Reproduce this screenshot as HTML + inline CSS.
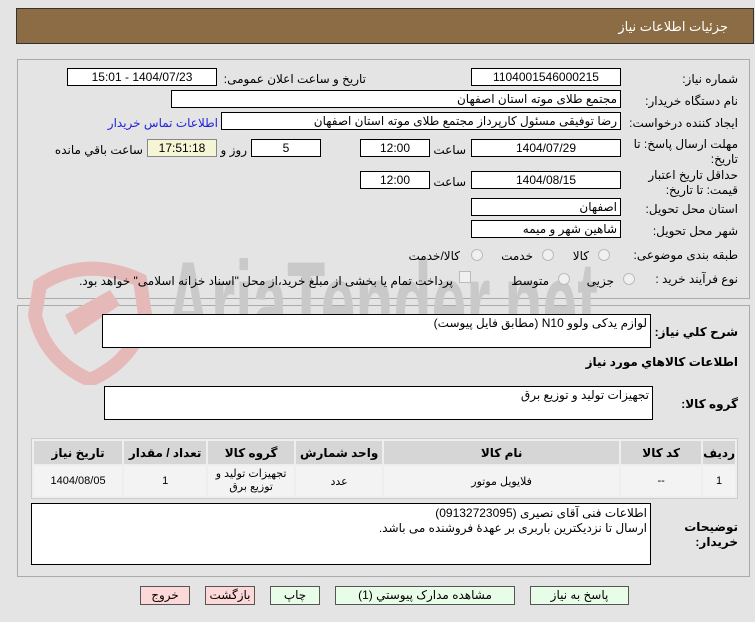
<!DOCTYPE html>
<html><head><meta charset="utf-8"><style>
*{box-sizing:border-box;margin:0;padding:0}
body{width:755px;height:622px;background:#e4e4e4;font-family:"Liberation Sans","DejaVu Sans",sans-serif;font-size:12px;color:#000;position:relative;overflow:hidden}
.a{position:absolute;white-space:nowrap}
.box{position:absolute;background:#fff;border:1px solid #000;height:18px;line-height:16px;padding:0 3px;direction:rtl;white-space:nowrap}
.c{text-align:center}
.l{position:absolute;direction:rtl;text-align:right;white-space:nowrap}
.rad{position:absolute;width:12px;height:12px;border-radius:50%;border:1px solid #bbb;background:#f0f0f0}
.btn{position:absolute;height:19px;border:1px solid #555;line-height:17px;text-align:center;direction:rtl;font-size:12px}
.g{background:#e8fde8}.p{background:#fdd8d8}
table{position:absolute;left:31px;top:438px;width:707px;border-collapse:separate;border-spacing:2px;background:#eee;border:1px solid #ccc;direction:rtl}
th{background:#d6d6d6;height:23px;font-weight:bold;font-size:12px}
td{background:#f3f3f3;height:30px;text-align:center;font-size:11px}
</style></head><body>
<div class="a" style="left:16px;top:8px;width:738px;height:36px;background:#8c6c44;border:1px solid #333"></div>
<div class="l" style="right:27px;top:19px;color:#fff;font-size:13px">جزئیات اطلاعات نیاز</div>

<div class="a" style="left:17px;top:59px;width:733px;height:240px;border:1px solid #aaa"></div>
<div class="a" style="left:17px;top:305px;width:733px;height:272px;border:1px solid #aaa"></div>

<!-- watermark -->
<svg class="a" style="left:15px;top:245px" width="620" height="140">
<path d="M25 40 Q70 10 125 35 L130 70 Q120 115 75 135 Q30 115 20 70 Z" fill="none" stroke="#e6b9b9" stroke-width="14"/>
<path d="M50 70 L95 45 L105 60 L60 90 Z" fill="#e6b9b9"/>
<text x="290" y="100" font-family="Liberation Sans" font-weight="bold" font-size="120" fill="#c9c9c9" transform="scale(0.52,1)">AriaTender.net</text>
</svg>

<div class="l" style="right:17px;top:72px">شماره نیاز:</div>
<div class="box c" style="left:471px;top:68px;width:150px">1104001546000215</div>
<div class="l" style="right:389px;top:72px">تاریخ و ساعت اعلان عمومی:</div>
<div class="box c" style="left:67px;top:68px;width:150px">1404/07/23 - 15:01</div>

<div class="l" style="right:17px;top:94px">نام دستگاه خریدار:</div>
<div class="box" style="left:171px;top:90px;width:450px">مجتمع طلای موته استان اصفهان</div>

<div class="l" style="right:17px;top:116px">ایجاد کننده درخواست:</div>
<div class="box" style="left:221px;top:112px;width:400px">رضا توفیقی مسئول کارپرداز مجتمع طلای موته استان اصفهان</div>
<div class="l" style="right:537px;top:116px;color:#2222dd">اطلاعات تماس خریدار</div>

<div class="l" style="right:17px;top:137px;line-height:15px;white-space:normal;width:105px">مهلت ارسال پاسخ: تا تاریخ:</div>
<div class="box c" style="left:471px;top:139px;width:150px">1404/07/29</div>
<div class="l" style="right:289px;top:143px">ساعت</div>
<div class="box c" style="left:360px;top:139px;width:70px">12:00</div>
<div class="box c" style="left:251px;top:139px;width:70px">5</div>
<div class="l" style="right:508px;top:143px">روز و</div>
<div class="box c" style="left:147px;top:139px;width:70px;background:#f5f5d5;border-color:#888">17:51:18</div>
<div class="l" style="right:612px;top:143px">ساعت باقي مانده</div>

<div class="l" style="right:17px;top:168px;line-height:15px;white-space:normal;width:105px">حداقل تاریخ اعتبار قیمت: تا تاریخ:</div>
<div class="box c" style="left:471px;top:171px;width:150px">1404/08/15</div>
<div class="l" style="right:289px;top:175px">ساعت</div>
<div class="box c" style="left:360px;top:171px;width:70px">12:00</div>

<div class="l" style="right:17px;top:202px">استان محل تحویل:</div>
<div class="box" style="left:471px;top:198px;width:150px">اصفهان</div>
<div class="l" style="right:17px;top:224px">شهر محل تحویل:</div>
<div class="box" style="left:471px;top:220px;width:150px">شاهین شهر و میمه</div>

<div class="l" style="right:17px;top:248px">طبقه بندی موضوعی:</div>
<div class="rad" style="left:598px;top:249px"></div><div class="l" style="right:166px;top:249px">کالا</div>
<div class="rad" style="left:542px;top:249px"></div><div class="l" style="right:222px;top:249px">خدمت</div>
<div class="rad" style="left:471px;top:249px"></div><div class="l" style="right:295px;top:249px">کالا/خدمت</div>

<div class="l" style="right:17px;top:272px">نوع فرآیند خرید :</div>
<div class="rad" style="left:623px;top:273px"></div><div class="l" style="right:141px;top:274px">جزیی</div>
<div class="rad" style="left:558px;top:273px"></div><div class="l" style="right:206px;top:274px">متوسط</div>
<div class="a" style="left:459px;top:271px;width:12px;height:12px;border:1px solid #bbb;background:#f0f0f0"></div>
<div class="l" style="right:302px;top:274px">پرداخت تمام یا بخشی از مبلغ خرید،از محل "اسناد خزانه اسلامی" خواهد بود.</div>

<div class="l" style="right:17px;top:325px;font-weight:bold">شرح کلي نیاز:</div>
<div class="box" style="left:102px;top:314px;width:549px;height:34px;background:#fff">لوازم یدکی ولوو N10 (مطابق فایل پیوست)</div>
<div class="l" style="right:17px;top:355px;font-weight:bold">اطلاعات کالاهاي مورد نیاز</div>
<div class="l" style="right:17px;top:397px;font-weight:bold">گروه کالا:</div>
<div class="box" style="left:104px;top:386px;width:549px;height:34px">تجهیزات تولید و توزیع برق</div>

<table>
<tr><th style="width:27px">ردیف</th><th style="width:80px">کد کالا</th><th style="width:235px">نام کالا</th><th style="width:86px">واحد شمارش</th><th style="width:86px">گروه کالا</th><th style="width:82px">تعداد / مقدار</th><th>تاریخ نیاز</th></tr>
<tr><td>1</td><td>--</td><td>فلایویل موتور</td><td>عدد</td><td style="line-height:13px">تجهیزات تولید و توزیع برق</td><td>1</td><td>1404/08/05</td></tr>
</table>

<div class="l" style="right:17px;top:520px;font-weight:bold;line-height:15px;white-space:normal;width:60px">توضیحات خریدار:</div>
<div class="box" style="left:31px;top:503px;width:620px;height:62px;line-height:15px;padding-top:2px">اطلاعات فنی آقای نصیری (09132723095)<br>ارسال تا نزدیکترین باربری بر عهدۀ فروشنده می باشد.</div>

<div class="btn p" style="left:140px;top:586px;width:50px">خروج</div>
<div class="btn p" style="left:205px;top:586px;width:50px">بازگشت</div>
<div class="btn g" style="left:270px;top:586px;width:50px">چاپ</div>
<div class="btn g" style="left:335px;top:586px;width:180px">مشاهده مدارک پیوستي (1)</div>
<div class="btn g" style="left:530px;top:586px;width:99px">پاسخ به نیاز</div>
</body></html>
